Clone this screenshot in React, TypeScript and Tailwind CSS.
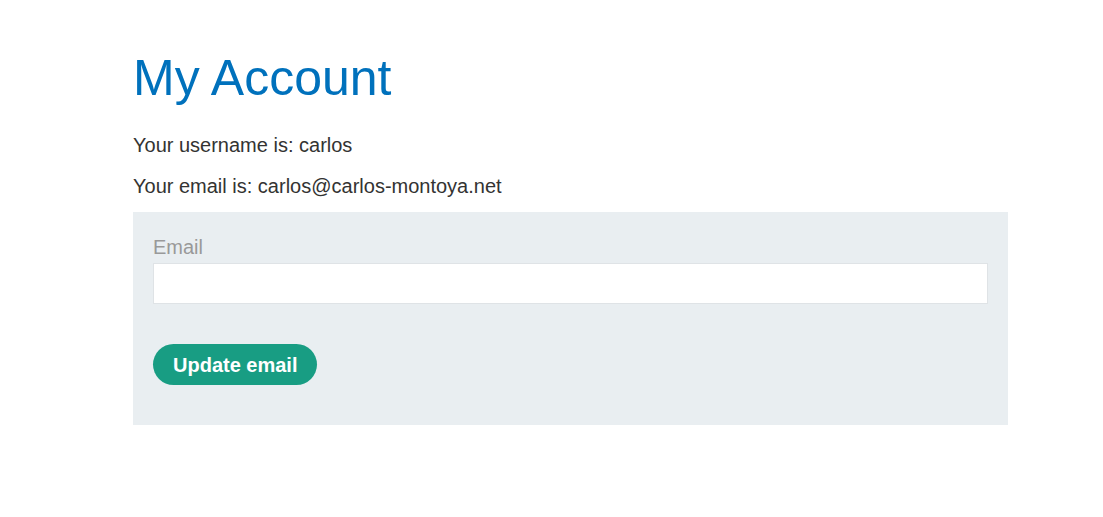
export default function App() {
  return (
    <div className="min-h-screen bg-white font-['Liberation_Sans',Arial,sans-serif] text-[#333332]">
      <div className="w-[875px] ml-[133px] pt-[48px]">
        <h1 className="text-[50px] leading-[60px] text-[#0071bc]">My Account</h1>
        <p className="mt-[25px] text-[20px] leading-[24px]">Your username is: carlos</p>
        <p className="mt-[17px] text-[20px] leading-[24px]">Your email is: carlos@carlos-montoya.net</p>
        <form className="mt-[14px] bg-[#e9eef1] px-5 pt-[23px] pb-[40px]" onSubmit={e => e.preventDefault()}>
          <label className="block text-[20px] leading-[24px] text-[#999]">Email</label>
          <input
            type="email"
            name="email"
            className="mt-[4px] block h-[41px] w-full border border-[#dfe3e6] bg-white px-2 outline-none"
          />
          <button
            type="submit"
            className="mt-[40px] h-[41px] rounded-full bg-[#189d83] px-5 text-[20px] font-bold text-white"
          >
            Update email
          </button>
        </form>
      </div>
    </div>
  )
}
